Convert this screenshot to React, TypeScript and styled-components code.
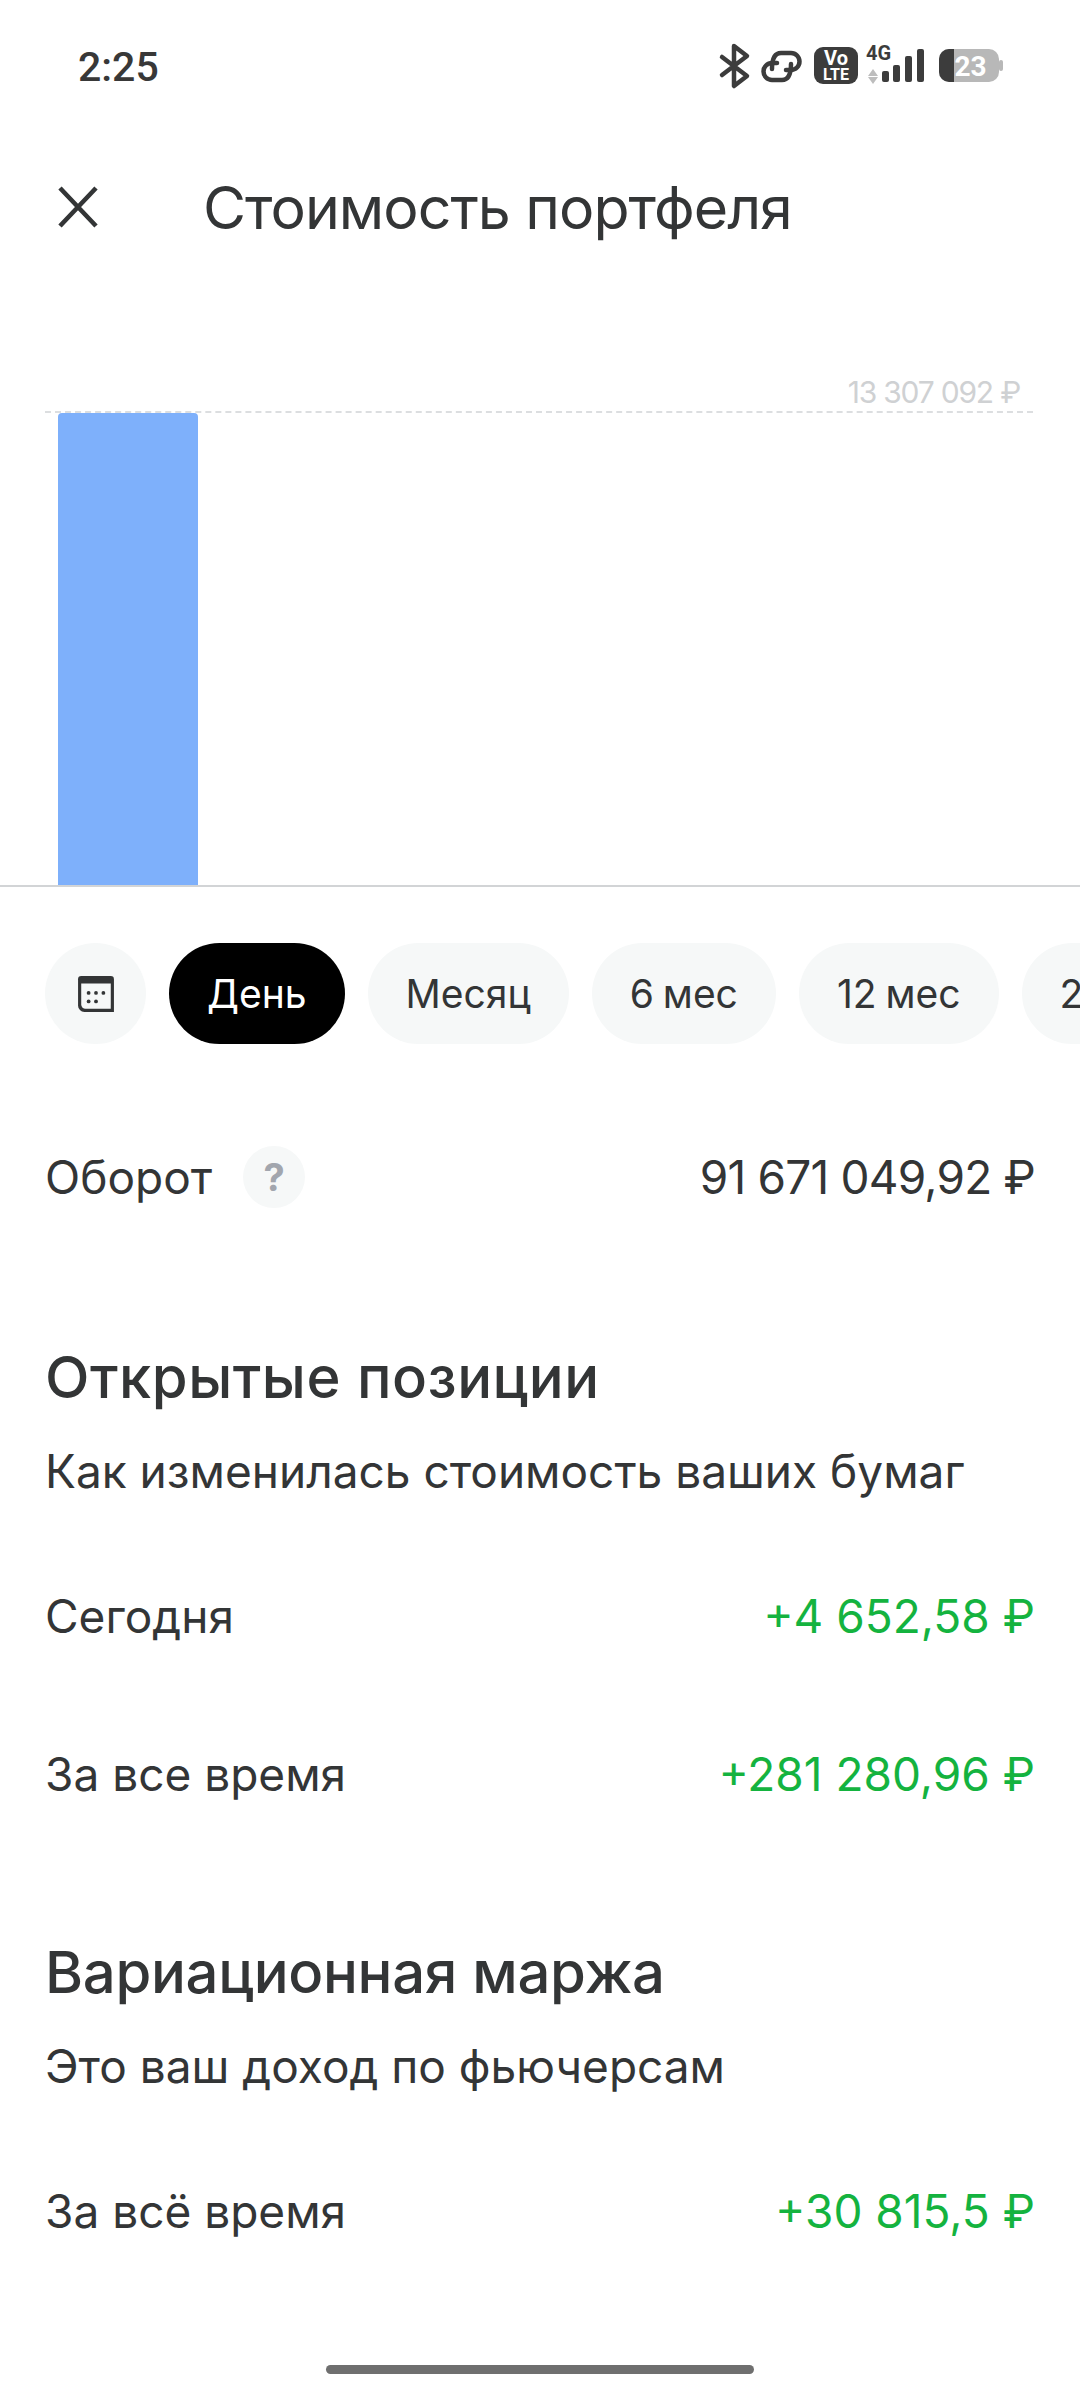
import React from "react";
import styled, { createGlobalStyle } from "styled-components";

const GlobalStyle = createGlobalStyle`
  html, body {
    margin: 0;
    padding: 0;
    background: #fff;
  }
  * {
    box-sizing: border-box;
  }
`;

const Screen = styled.div`
  position: relative;
  width: 1080px;
  height: 2392px;
  overflow: hidden;
  background: #fff;
  color: #333536;
  font-family: Inter, "Noto Sans", sans-serif;
  display: flex;
  flex-direction: column;
`;

const StatusBar = styled.div`
  height: 134px;
  padding: 0 73px 0 78px;
  display: flex;
  align-items: center;
  justify-content: space-between;
`;

const Time = styled.div`
  font-family: Roboto, sans-serif;
  font-size: 41px;
  font-weight: 500;
  color: #383838;
`;

const Header = styled.div`
  height: 146px;
  padding-left: 56px;
  display: flex;
  align-items: center;
  gap: 103px;
`;

const Title = styled.h1`
  margin: 0;
  font-size: 59px;
  font-weight: 400;
  letter-spacing: -1px;
  color: #333536;
`;

const Chart = styled.div`
  height: 607px;
  border-bottom: 2px solid #d2d4d6;
  padding: 93px 47px 0 45px;
  display: flex;
  flex-direction: column;
`;

const ChartLabel = styled.div`
  height: 38px;
  text-align: right;
  padding-right: 13px;
  font-size: 30px;
  line-height: 38px;
  color: #cfd1d3;
  letter-spacing: -1.2px;
`;

const ChartGrid = styled.div`
  flex: 1;
  border-top: 2px dashed #dcdee0;
  padding-left: 13px;
  display: flex;
`;

const Bar = styled.div`
  width: 140px;
  height: 100%;
  background: #7eb0fb;
  border-radius: 4px 4px 0 0;
`;

const Chips = styled.div`
  margin-top: 56px;
  padding-left: 45px;
  display: flex;
  gap: 23px;
  width: 1300px;
`;

const IconChip = styled.div`
  flex: none;
  width: 101px;
  height: 101px;
  border-radius: 50%;
  background: #f6f8f8;
  display: flex;
  align-items: center;
  justify-content: center;
`;

const Chip = styled.div<{ $active?: boolean }>`
  flex: none;
  height: 101px;
  padding: 0 38px;
  border-radius: 51px;
  background: ${(p) => (p.$active ? "#000" : "#f6f8f8")};
  color: ${(p) => (p.$active ? "#fff" : "#333536")};
  font-size: 39px;
  word-spacing: -2px;
  white-space: nowrap;
  display: flex;
  align-items: center;
`;

const Row = styled.div<{ $top: number }>`
  margin-top: ${(p) => p.$top}px;
  padding: 0 45px;
  height: 62px;
  display: flex;
  align-items: center;
  justify-content: space-between;
  font-size: 46px;
`;

const RowLabel = styled.div`
  display: flex;
  align-items: center;
  gap: 31px;
`;

const Help = styled.div`
  width: 62px;
  height: 62px;
  border-radius: 50%;
  background: #f6f8f8;
  color: #a2a6ae;
  font-size: 38px;
  font-weight: 700;
  display: flex;
  align-items: center;
  justify-content: center;
`;

const Amount = styled.div<{ $green?: boolean; $tight?: boolean }>`
  color: ${(p) => (p.$green ? "#14b33f" : "#333536")};
  letter-spacing: ${(p) => (p.$tight ? "-0.8px" : "normal")};
`;

const SectionTitle = styled.h2<{ $top: number; $wide?: boolean }>`
  margin: ${(p) => p.$top}px 0 0;
  padding: 0 45px;
  height: 70px;
  line-height: 70px;
  font-size: 58px;
  font-weight: 500;
  letter-spacing: ${(p) => (p.$wide ? "0.5px" : "-0.3px")};
  color: #333536;
`;

const SectionText = styled.div`
  margin-top: 29px;
  padding: 0 45px;
  height: 60px;
  line-height: 60px;
  font-size: 46px;
`;

const HomeBar = styled.div`
  position: absolute;
  left: 326px;
  top: 2365px;
  width: 428px;
  height: 9px;
  border-radius: 5px;
  background: #6f6f6f;
`;

const CloseIcon = () => (
  <svg width="44" height="44" viewBox="0 0 44 44">
    <path d="M4 3l36 38M40 3L4 41" fill="none" stroke="#333536" strokeWidth="4.6" />
  </svg>
);

const Calendar = () => (
  <svg width="38" height="38" viewBox="0 0 36 36">
    <path d="M4 1h28a3 3 0 0 1 3 3v31H7a6 6 0 0 1-6-6V4a3 3 0 0 1 3-3z" fill="#333536" />
    <path d="M4 8h28v24H8a4 4 0 0 1-4-4z" fill="#f6f8f8" />
    <g fill="#333536">
      <circle cx="11" cy="17" r="1.8" />
      <circle cx="18" cy="17" r="1.8" />
      <circle cx="25" cy="17" r="1.8" />
      <circle cx="11" cy="25" r="1.8" />
      <circle cx="18" cy="25" r="1.8" />
    </g>
  </svg>
);

const StatusGlyphs = () => (
  <svg width="292" height="60" viewBox="0 -6 292 60">
    <path d="M7 14l25 19-13 10V3l13 10L7 32" fill="none" stroke="#3c3c3c" strokeWidth="4.5" strokeLinecap="round" strokeLinejoin="round" />
    <g fill="none" stroke="#3c3c3c" strokeWidth="4.5" strokeLinecap="round">
      <path d="M57 26C57 16 60 10 66 10H76A8.5 8.5 0 0 1 76 27H71" />
      <path d="M76 21C76 31 73 37 67 37H57A8.5 8.5 0 0 1 57 20H62" />
    </g>
    <rect x="99" y="4" width="44" height="37" rx="9" fill="#3c3c3c" />
    <text x="121" y="22" textAnchor="middle" fontFamily="Roboto" fontWeight="700" fontSize="20" fill="#fff">Vo</text>
    <text x="121" y="37" textAnchor="middle" fontFamily="Roboto" fontWeight="700" fontSize="16" fill="#fff">LTE</text>
    <text x="151" y="17" fontFamily="Roboto" fontWeight="700" fontSize="20" fill="#3c3c3c">4G</text>
    <path d="M158 26l5 7h-10zM158 41l5-7h-10z" fill="#bdbdbd" />
    <rect x="167" y="28" width="7" height="11" rx="2" fill="#3c3c3c" />
    <rect x="178" y="22" width="7" height="17" rx="2" fill="#3c3c3c" />
    <rect x="190" y="13" width="7" height="26" rx="2" fill="#3c3c3c" />
    <rect x="202" y="6" width="7" height="33" rx="2" fill="#3c3c3c" />
    <rect x="224" y="6" width="60" height="33" rx="10" fill="#b8b8b8" />
    <path d="M234 6h5v33h-5a10 10 0 0 1-10-10V16a10 10 0 0 1 10-10z" fill="#3c3c3c" />
    <rect x="284" y="17" width="4" height="11" rx="2" fill="#b8b8b8" />
    <text x="255.5" y="33" textAnchor="middle" fontFamily="Roboto" fontWeight="700" fontSize="28" fill="#fff">23</text>
  </svg>
);

const App = () => (
  <>
    <GlobalStyle />
    <Screen>
      <StatusBar>
        <Time>2:25</Time>
        <StatusGlyphs />
      </StatusBar>
      <Header>
        <CloseIcon />
        <Title>Стоимость портфеля</Title>
      </Header>
      <Chart>
        <ChartLabel>13 307 092 ₽</ChartLabel>
        <ChartGrid>
          <Bar />
        </ChartGrid>
      </Chart>
      <Chips>
        <IconChip>
          <Calendar />
        </IconChip>
        <Chip $active>День</Chip>
        <Chip>Месяц</Chip>
        <Chip>6 мес</Chip>
        <Chip>12 мес</Chip>
        <Chip>2 года</Chip>
      </Chips>
      <Row $top={102}>
        <RowLabel>
          Оборот
          <Help>?</Help>
        </RowLabel>
        <Amount $tight>91 671 049,92 ₽</Amount>
      </Row>
      <SectionTitle $top={134} $wide>Открытые позиции</SectionTitle>
      <SectionText>Как изменилась стоимость ваших бумаг</SectionText>
      <Row $top={84}>
        <span>Сегодня</span>
        <Amount $green>+4 652,58 ₽</Amount>
      </Row>
      <Row $top={96}>
        <span>За все время</span>
        <Amount $green>+281 280,96 ₽</Amount>
      </Row>
      <SectionTitle $top={132}>Вариационная маржа</SectionTitle>
      <SectionText>Это ваш доход по фьючерсам</SectionText>
      <Row $top={84}>
        <span>За всё время</span>
        <Amount $green>+30 815,5 ₽</Amount>
      </Row>
      <HomeBar />
    </Screen>
  </>
);

export default App;
